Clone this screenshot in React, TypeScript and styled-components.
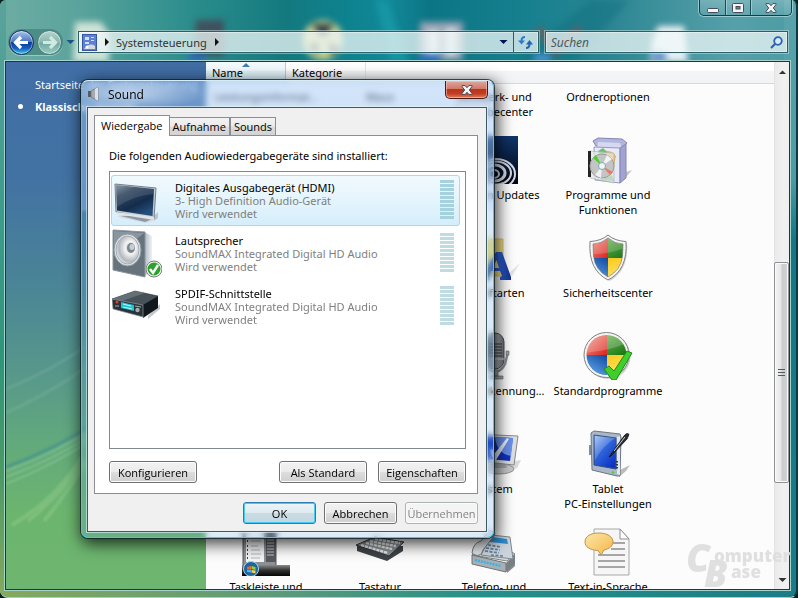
import React, { useState } from "react";
import styled, { createGlobalStyle, css } from "styled-components";

const GlobalStyle = createGlobalStyle`
  *, *::before, *::after { box-sizing: border-box; }
  body { margin: 0; background: #05302f; overflow: hidden; }
  button, input { font: inherit; color: inherit; margin: 0; padding: 0; }
  ul { list-style: none; margin: 0; padding: 0; }
`;

/* ---------- Explorer window ---------- */

const Desktop = styled.div`
  position: relative;
  height: 100vh;
  min-width: 600px;
  overflow: hidden;
  font-family: "Noto Sans", "Open Sans", sans-serif;
  font-size: 11px;
  line-height: 15px;
  color: #000;
  background: #06201f;
`;

const ExplorerWindow = styled.main`
  position: relative;
  display: flex;
  flex-direction: column;
  height: 100%;
  padding: 0 8px 7px 5px;
  overflow: hidden;
  border: solid #9fd0cc;
  border-width: 0 2px 1px 0;
  border-right-color: #0c3b42;
  border-radius: 6px 6px 8px 8px;
  background:
    linear-gradient(90deg, #86a95c, #5d9a78 35%, #279089 60%, #1b7c86) bottom / 100% 9px no-repeat,
    linear-gradient(180deg, #5aa39c 0, #3c9c8c 35%, #2e9579 60%, #4c9a63 80%, #86a95c) left / 6px 100% no-repeat,
    linear-gradient(180deg, #5aa3ab 0, #4c9ba4 30%, #137885 40%, #1b7c8a) right / 12px 100% no-repeat,
    linear-gradient(90deg, #6dada3 0, #5aa39c 10%, #2b8d8c 24%, #14797f 36%, #0d8390 44%, #128898 49%, #0c7585 54%, #16808f 66%, #2a8592 76%, #56a0a9 92%, #4c9ba4);
`;

const Wallpaper = styled.svg`
  position: absolute;
  inset: 0 auto auto 0;
  width: 798px;
  height: 62px;
  filter: blur(3px);
`;

const CaptionButtons = styled.div`
  position: relative;
  display: flex;
  align-self: flex-end;
  height: 16px;
  margin-right: -4px;
  border: 1px solid #123f47;
  border-top: 0;
  border-radius: 0 0 5px 5px;
  box-shadow: 0 0 0 1px rgba(190, 228, 230, 0.65);
  background: linear-gradient(rgba(255, 255, 255, 0.22), rgba(255, 255, 255, 0.08));
`;

const CaptionButton = styled.button<{ $wide?: boolean }>`
  display: flex;
  align-items: center;
  justify-content: center;
  width: ${(p) => (p.$wide ? 41 : 25)}px;
  border: 0;
  background: none;
  & + & { border-left: 1px solid #1b4c54; box-shadow: inset 1px 0 rgba(200, 232, 233, 0.5); }
`;

const NavBar = styled.nav`
  position: relative;
  display: flex;
  align-items: center;
  height: 45px;
  padding: 7px 0 0 3px;
  gap: 3px;
  flex: none;
`;

const HistoryButtons = styled.div`
  display: flex;
  align-items: center;
  flex: none;
  height: 26px;
  gap: 3px;
  padding: 0 1px;
  border-radius: 13px;
  background: rgba(20, 80, 80, 0.3);
  box-shadow: 0 1px rgba(200, 235, 230, 0.5);
`;

const RoundButton = styled.button<{ $active?: boolean }>`
  display: grid;
  place-items: center;
  width: 25px;
  height: 25px;
  border-radius: 50%;
  border: 1px solid ${(p) => (p.$active ? "#15305f" : "#4f7f7c")};
  background: ${(p) =>
    p.$active
      ? "linear-gradient(#a9c3ea 0, #4a78c4 46%, #0c3a94 50%, #1460c0 75%, #3ec4f2)"
      : "linear-gradient(#b5d4ce, #86b8b0 48%, #6fa9a1 52%, #9cccc2)"};
  box-shadow: inset 0 0 0 1px rgba(255, 255, 255, 0.45);
`;

const PlainButton = styled.button`
  display: grid;
  place-items: center;
  border: 0;
  background: none;
  flex: none;
`;

const fieldBox = css`
  display: flex;
  align-items: center;
  height: 22px;
  border: 1px solid #2c5f66;
  box-shadow: inset 0 0 0 1px rgba(255, 255, 255, 0.45), 0 0 0 1px rgba(205, 232, 232, 0.5);
  background: rgba(240, 248, 248, 0.75);
`;

const AddressBar = styled.div`
  ${fieldBox}
  flex: 468 1 0;
  min-width: 0;
`;

const Crumbs = styled.div`
  display: flex;
  flex: 1;
  align-items: center;
  gap: 5px;
  padding-left: 3px;
  color: #333;
`;

const Refresh = styled(PlainButton)`
  width: 25px;
  height: 20px;
  margin-left: 5px;
  border-left: 1px solid #2c5f66;
`;

const SearchBar = styled.label`
  ${fieldBox}
  flex: 237 1 0;
  min-width: 0;
  margin-left: 3px;
  padding: 0 4px 0 5px;
`;

const SearchInput = styled.input`
  flex: 1;
  min-width: 0;
  border: 0;
  outline: 0;
  background: none;
  font-style: italic;
  font-size: 12px;
  &::placeholder { color: #4a5c60; opacity: 1; }
`;

const Client = styled.div`
  position: relative;
  display: flex;
  flex: 1;
  min-height: 0;
  margin-right: -2px;
  border: 1px solid #123c44;
  box-shadow: 0 0 0 1px #a8d2cd;
  background: #fcfcfc;
`;

const Sidebar = styled.aside`
  position: relative;
  width: 200px;
  flex: none;
  padding: 11px 0 0 14px;
  overflow: hidden;
  color: #fff;
  background: linear-gradient(#416ea6 0, #4272a3 22%, #4a8496 42%, #58998a 60%, #62a97c 72%, #6cb56e 86%, #6eb670);
`;

const Streaks = styled.svg`
  position: absolute;
  left: 0;
  bottom: 20px;
  width: 200px;
  height: 240px;
  filter: blur(1px);
`;

const SideLink = styled.a<{ $current?: boolean }>`
  display: grid;
  grid-template-columns: 15px 1fr;
  align-items: center;
  height: 22px;
  color: #fff;
  text-decoration: none;
  white-space: nowrap;
  font-weight: ${(p) => (p.$current ? 700 : 400)};
  &::before {
    content: "";
    width: 5px;
    height: 5px;
    border-radius: 50%;
    margin-left: -2px;
    background: ${(p) => (p.$current ? "#fff" : "transparent")};
  }
`;

const FolderView = styled.section`
  display: flex;
  flex-direction: column;
  flex: 1;
  min-width: 0;
  overflow: hidden;
`;

const ColumnHeader = styled.div`
  display: flex;
  flex: none;
  height: 22px;
  border-bottom: 1px solid #d5d8dc;
  background: linear-gradient(#fff 0, #fff 40%, #f4f5f7 42%, #f2f3f5);
`;

const HeaderCell = styled.button<{ $sorted?: boolean }>`
  position: relative;
  width: 80px;
  padding-left: 6px;
  text-align: left;
  border: 0;
  border-right: 1px solid ${(p) => (p.$sorted ? "#9bd6f0" : "#e2e4e7")};
  background: ${(p) => (p.$sorted ? "linear-gradient(#f2fafd 0, #f2fafd 40%, #e2f3fa 42%, #d9eff8)" : "none")};
  svg { position: absolute; left: 36px; top: 1px; }
`;

const IconScroller = styled.div`
  flex: 1;
  min-height: 0;
  overflow: hidden;
`;

const IconGrid = styled.div`
  display: grid;
  grid-template-columns: repeat(4, 114px);
  grid-auto-rows: 98px;
  margin: -46px 0 0 3px;
`;

const IconCell = styled.a<{ $col: number; $row: number }>`
  grid-column: ${(p) => p.$col};
  grid-row: ${(p) => p.$row};
  display: flex;
  flex-direction: column;
  align-items: center;
  gap: 3px;
  color: #000;
  text-align: center;
  text-decoration: none;
  white-space: pre;
  svg { flex: none; }
`;

const ScrollTrack = styled.div`
  display: flex;
  flex-direction: column;
  width: 15px;
  flex: none;
  border-left: 1px solid #e3e3e3;
  background: linear-gradient(90deg, #eaeaea, #f1f1f1 60%, #efefef);
`;

const ScrollButton = styled(PlainButton)`
  height: 19px;
`;

const Spacer = styled.div<{ $grow: number }>`
  flex: ${(p) => p.$grow} 1 0;
`;

const ScrollThumb = styled.div`
  flex: 220 1 0;
  display: grid;
  place-items: center;
  margin-left: -1px;
  border: 1px solid #8f9194;
  border-radius: 2px;
  box-shadow: inset 0 0 0 1px #fafafa;
  background: linear-gradient(90deg, #f4f4f4, #e6e6e8 45%, #c9cbce 55%, #d2d3d6);
`;

/* ---------- Sound dialog ---------- */

const Dialog = styled.div`
  position: absolute;
  left: 81px;
  top: 80px;
  width: 413px;
  max-width: calc(100% - 90px);
  padding: 0 6px 5px 5px;
  border: 1px solid #d5ecf4;
  border-color: #d5ecf4 #38cdf2 #38cdf2 #7fb4bd;
  border-radius: 7px;
  box-shadow: 0 0 0 1px rgba(10, 30, 35, 0.75), 2px 4px 16px 2px rgba(0, 0, 0, 0.75);
  backdrop-filter: blur(3px);
  background:
    radial-gradient(ellipse 75px 16px at 48px 13px, rgba(225, 236, 250, 0.7), transparent),
    linear-gradient(180deg, rgba(160, 200, 245, 0.45) 0, rgba(150, 190, 245, 0.45) 28%, rgba(90, 170, 230, 0.22) 29%, rgba(90, 160, 235, 0.2));
`;

const TitleBar = styled.header`
  position: relative;
  display: flex;
  align-items: center;
  height: 26px;
  gap: 7px;
  font-family: "Open Sans", sans-serif;
  font-size: 12px;
`;

const CloseButton = styled.button`
  align-self: flex-start;
  display: grid;
  place-items: center;
  width: 43px;
  height: 18px;
  margin: 0 -1px 0 auto;
  border: 1px solid #4b1b17;
  border-top: 0;
  border-radius: 0 0 5px 5px;
  box-shadow: inset 0 0 0 1px rgba(255, 200, 190, 0.55);
  background: linear-gradient(#e0a79c 0, #d07a69 46%, #b93320 50%, #c33d22 75%, #df8058);
`;

const DialogBody = styled.div`
  padding: 7px 8px 7px 6px;
  border: 1px solid #3a5a66;
  box-shadow: 0 0 0 1px rgba(230, 245, 250, 0.6);
  background: #f0f0f0;
`;

const Tabs = styled.div`
  display: flex;
  align-items: flex-end;
  font-family: "Open Sans", sans-serif;
`;

const Tab = styled.button<{ $active: boolean }>`
  position: relative;
  height: ${(p) => (p.$active ? 21 : 18)}px;
  padding: ${(p) => (p.$active ? "0 6px 2px" : "0 3px")};
  margin-bottom: ${(p) => (p.$active ? -1 : 0)}px;
  border: 1px solid #8b8d96;
  border-bottom: 0;
  background: ${(p) => (p.$active ? "#fff" : "linear-gradient(#f3f3f3, #ebebeb 48%, #dddddd 52%, #d2d2d2)")};
  & + & { border-left-width: ${(p) => (p.$active ? 1 : 0)}px; }
  & + & + & { border-left-width: 1px; }
`;

const TabPanel = styled.div`
  padding: 12px 11px 10px 14px;
  border: 1px solid #8b8d96;
  background: #fff;
`;

const Intro = styled.p`
  margin: 0 0 8px;
`;

const DeviceList = styled.ul`
  display: flex;
  flex-direction: column;
  gap: 2px;
  min-height: 278px;
  padding: 3px 5px 3px 1px;
  border: 1px solid #828790;
`;

const DeviceRow = styled.li<{ $selected: boolean }>`
  display: grid;
  grid-template-columns: 50px 1fr 14px;
  column-gap: 13px;
  height: 51px;
  padding: 0 5px 0 0;
  border: 1px solid ${(p) => (p.$selected ? "#99defd" : "transparent")};
  border-radius: 3px;
  background: ${(p) => (p.$selected ? "linear-gradient(#f1fafe, #e3f4fc 55%, #d5eefb)" : "none")};
`;

const DeviceText = styled.div`
  padding-top: 5px;
  line-height: 13px;
  color: #7f7f7f;
  white-space: nowrap;
`;

const DeviceName = styled.div`
  color: #000;
`;

const Meter = styled.div<{ $selected: boolean }>`
  height: 39px;
  margin-top: 4px;
  background: repeating-linear-gradient(${(p) => (p.$selected ? "#a6d2df" : "#c0dce3")} 0 3px, transparent 3px 4px);
`;

const ButtonRow = styled.div<{ $top: number; $gap: number }>`
  display: flex;
  justify-content: flex-end;
  gap: ${(p) => p.$gap}px;
  margin-top: ${(p) => p.$top}px;
`;

const PushButton = styled.button<{ $width: number; $default?: boolean; $first?: boolean }>`
  width: ${(p) => p.$width}px;
  height: 22px;
  margin-right: ${(p) => (p.$first ? "auto" : "0")};
  border: 1px solid ${(p) => (p.$default ? "#2b7cb0" : "#707070")};
  border-radius: 3px;
  white-space: nowrap;
  font-family: "Open Sans", sans-serif;
  box-shadow: ${(p) => (p.$default ? "inset 0 0 0 1px #43cdf5" : "inset 0 0 0 1px #fcfcfc")};
  background: ${(p) =>
    p.$default
      ? "linear-gradient(#eef4f7, #dfeaf0 48%, #cadbe4 52%, #c3d6e0)"
      : "linear-gradient(#f2f2f2, #ebebeb 48%, #dddddd 52%, #cfcfcf)"};
  &:disabled { color: #838383; border-color: #adb2b5; background: #f4f4f4; }
`;

/* ---------- Watermark ---------- */

const Watermark = styled.svg`
  position: absolute;
  right: 8px;
  bottom: 6px;
  width: 110px;
  height: 50px;
  font-family: "Open Sans", sans-serif;
  font-weight: 800;
  fill: #dedede;
  opacity: 0.9;
`;

/* ---------- Drawings ---------- */

const XGlyph = () => (
  <svg width="12" height="10" viewBox="0 0 12 10" aria-hidden>
    <path d="M1 .6h3.2L6 2.7 7.8.6H11v1L8.3 5 11 8.4v1H7.8L6 7.3 4.2 9.4H1v-1L3.7 5 1 1.6Z" fill="#f4f4f4" stroke="#474c58" />
  </svg>
);

const Arrow = ({ dir, dim }: { dir: "left" | "right"; dim?: boolean }) => (
  <svg width="17" height="15" viewBox="0 0 17 15" aria-hidden>
    <path
      d={dir === "left" ? "M8 2 2.500 7.500 8 13M3 7.500h12" : "M9 2l5.500 5.500L9 13M14 7.500H2"}
      fill="none"
      stroke={dim ? "#d4e8e3" : "#fff"}
      strokeWidth="3.2"
    />
  </svg>
);

const Triangle = ({ dir = "down", color = "#111" }: { dir?: "down" | "right" | "up"; color?: string }) => (
  <svg width="9" height="8" viewBox="0 0 9 8" aria-hidden>
    <path d={{ down: "M.5 2h8l-4 4Z", right: "M3 0v8l4-4Z", up: "M1 6h7L4.500 2.500Z" }[dir]} fill={color} />
  </svg>
);

const TvIcon = () => (
  <svg width="48" height="48" viewBox="0 0 48 48" aria-hidden>
    <defs>
      <linearGradient id="tv" x1="0" y1="0" x2=".6" y2="1">
        <stop offset="0" stopColor="#8090a4" /><stop offset=".3" stopColor="#33475e" /><stop offset=".7" stopColor="#142c4c" /><stop offset="1" stopColor="#244d78" />
      </linearGradient>
    </defs>
    <path d="M42 40 46 36v6l-4 3Z" fill="#b9c6cf" />
    <path d="M14 38 5 40l5 2 24 5 9-3-8-4Z" fill="#d5dade" />
    <path d="M9 40 33 46l7-3-6-3Z" fill="#8d98a4" />
    <path d="M3 8 44 12 42 43 4 36Z" fill="#c4ccd3" stroke="#75808a" />
    <path d="M4 36 42 41v3L5 38Z" fill="#dfe4e8" />
    <path d="M4 9 42 13 40.500 40 5 34.500Z" fill="url(#tv)" />
    <path d="M4 9 42 13 41.500 18 Q20 20 5 31Z" fill="#b8c6d6" opacity=".16" />
  </svg>
);

const SpeakerIcon = () => (
  <svg width="50" height="50" viewBox="0 0 50 50" aria-hidden>
    <defs>
      <radialGradient id="cone" cx=".62" cy=".42" r=".65">
        <stop offset="0" stopColor="#a4abb0" /><stop offset=".35" stopColor="#f4f4f4" /><stop offset=".75" stopColor="#b1b8bd" /><stop offset="1" stopColor="#e6e9eb" />
      </radialGradient>
      <linearGradient id="side" x1="0" x2="1"><stop offset="0" stopColor="#a8b4c0" /><stop offset="1" stopColor="#eff3f7" /></linearGradient>
    </defs>
    <path d="M32 3 40 7v33l-8 8Z" fill="url(#side)" />
    <path d="M1 1 33 3v45L1 41Z" fill="#66727c" stroke="#8b959d" />
    <path d="M2 2 32 4 22 12 2 27Z" fill="#8996a0" />
    <ellipse cx="15.500" cy="21" rx="13.500" ry="16" fill="#dfe3e6" stroke="#8d979f" />
    <ellipse cx="15.500" cy="21" rx="11.500" ry="14" fill="url(#cone)" stroke="#a6aeb4" />
    <ellipse cx="19" cy="19" rx="4" ry="5" fill="#7c868d" /><ellipse cx="20" cy="18" rx="2.500" ry="3" fill="#c9ced2" />
    <circle cx="42" cy="40" r="7.500" fill="#2ba329" stroke="#f2f2f2" strokeWidth="2" />
    <circle cx="42" cy="40" r="8" fill="none" stroke="#777e77" />
    <path d="m38 40 3 4 5-8" fill="none" stroke="#fff" strokeWidth="2.400" />
  </svg>
);

const ReceiverIcon = () => (
  <svg width="48" height="48" viewBox="0 0 48 48" aria-hidden>
    <path d="M36 34 48 22v5L36 37Z" fill="#c4c8ca" />
    <path d="M0 17 23 9 46 14 31 24Z" fill="#485158" stroke="#2c343a" strokeWidth=".6" />
    <path d="M0 17 23 9l10 2L10 19Z" fill="#78848a" opacity=".6" />
    <path d="M31 23 46 14v12L31 36Z" fill="#12191e" />
    <path d="M0 17 31 23v12L1 27Z" fill="#2a3238" stroke="#8c989e" strokeWidth=".7" />
    <path d="m9 20 13 3v6L9 26Z" fill="#1fc3d3" />
    <path d="m11 22 8 2m-8 1 9 2" stroke="#bdf8fb" />
    <circle cx="5" cy="20" r="1.500" fill="#e5372c" /><circle cx="25.500" cy="28" r="2.200" fill="#a2adb3" />
    <path d="M3 24h4m16 0 6 1" stroke="#a2adb3" />
  </svg>
);

const BoxIcon = () => (
  <svg width="48" height="48" viewBox="0 0 48 48" aria-hidden>
    <path d="M36 38 48 34l-5 6-8 6Z" fill="#c4c4c8" />
    <path d="M9 5 14 2l24 1 5 4-5 5-26-2Z" fill="#b2b6dc" stroke="#8588b4" />
    <path d="M14 6 36 7l2 6-25-1Z" fill="#d6d8f2" />
    <path d="M10 11 36 12v35L11 44Z" fill="#e9eaf8" stroke="#9699c0" />
    <path d="M36 12 42 8v34l-6 5Z" fill="#a1a4d2" stroke="#8588b4" />
    <path d="M19 15q9-1 13 5l-2 11-10-3Z" fill="#eeb654" /><path d="m14 15 5-3 4 4-7 6Z" fill="#6dbb7a" /><path d="m16 44 12-5 2 6Z" fill="#56a764" />
    <path d="M5 15 30 17v30L6 42Z" fill="#e2e7e3" opacity=".75" stroke="#b2b9b4" />
    <path d="M4 15h3v26H4Z" fill="#252525" />
    <circle cx="18" cy="30" r="12" fill="#c3c5c5" stroke="#9b9d9d" />
    <path d="M18 30 9 22l3-3Z" fill="#50ce30" /><path d="m18 30 5-11 5 4Z" fill="#f3f3f3" /><path d="m18 30 11 6-3 3Z" fill="#e87a69" /><path d="m18 30-7 9 6 3Z" fill="#f0f0f0" />
    <circle cx="18" cy="30" r="3.500" fill="#eff6f9" stroke="#83a6b2" />
  </svg>
);

const QuadDefs = () => (
  <defs>
    <linearGradient id="qr" x1="0" y1="0" x2="1" y2="1"><stop offset="0" stopColor="#f9b0a4" /><stop offset="1" stopColor="#d9241c" /></linearGradient>
    <linearGradient id="qg" x1="0" y1="0" x2=".6" y2="1"><stop offset="0" stopColor="#7cb860" /><stop offset="1" stopColor="#1b7a14" /></linearGradient>
    <linearGradient id="qb" x1="1" y1="0" x2=".4" y2="1"><stop offset="0" stopColor="#1048a0" /><stop offset="1" stopColor="#69b0f2" /></linearGradient>
    <linearGradient id="qy" x1="0" y1="0" x2=".4" y2="1"><stop offset="0" stopColor="#fbc81c" /><stop offset="1" stopColor="#fdea72" /></linearGradient>
  </defs>
);

const ShieldIcon = () => (
  <svg width="48" height="48" viewBox="0 0 48 48" aria-hidden>
    <QuadDefs />
    <clipPath id="shield"><path d="M24 4Q31 10 39 10L38.500 22Q37 36 24 43 11 36 9.500 22L9 10Q17 10 24 4Z" /></clipPath>
    <path d="M25 2Q33 8 43 9 45 36 26 47 8 38 7 9 19 8 25 2Z" fill="#aaa" opacity=".5" />
    <path d="M24 1Q31 7 42 7.500 44 36 24 46 4 36 6 7.500 17 7 24 1Z" fill="#f4f4f4" stroke="#808080" />
    <g clipPath="url(#shield)">
      <path d="M0 0h24v24H0Z" fill="url(#qr)" /><path d="M24 0h24v24H24Z" fill="url(#qg)" /><path d="M0 24h24v24H0Z" fill="url(#qb)" /><path d="M24 24h24v24H24Z" fill="url(#qy)" />
      <path d="M8 20Q26 20 40 14V8L24 3 8 8Z" fill="#fff" opacity=".18" />
    </g>
    <path d="M24 4Q31 10 39 10L38.500 22Q37 36 24 43 11 36 9.500 22L9 10Q17 10 24 4Z" fill="none" stroke="#6d6d6d" strokeWidth=".6" />
  </svg>
);

const DefaultsIcon = () => (
  <svg width="50" height="48" viewBox="0 0 50 48" aria-hidden>
    <QuadDefs />
    <clipPath id="disc"><circle cx="23.500" cy="23" r="20" /></clipPath>
    <circle cx="25" cy="24.500" r="22.500" fill="#999" opacity=".45" />
    <circle cx="23.500" cy="23" r="22.500" fill="#f4f4f4" stroke="#808080" />
    <g clipPath="url(#disc)">
      <path d="M0 0h24v23H0Z" fill="url(#qr)" /><path d="M24 0h24v23H24Z" fill="url(#qg)" /><path d="M0 23h24v24H0Z" fill="url(#qb)" /><path d="M24 23h24v24H24Z" fill="url(#qy)" />
      <path d="M0 21Q26 19 46 10V0H0Z" fill="#fff" opacity=".2" />
    </g>
    <path d="m21 37 5-3 5 5L44 19l5 2-16 27h-4Z" fill="#3fcf2b" stroke="#1c8b18" />
  </svg>
);

const TabletIcon = () => (
  <svg width="48" height="48" viewBox="0 0 48 48" aria-hidden>
    <defs><linearGradient id="tab" x1="0" y1="0" x2=".7" y2="1"><stop offset="0" stopColor="#9cc0f6" /><stop offset=".45" stopColor="#3268dc" /><stop offset="1" stopColor="#0c34c4" /></linearGradient></defs>
    <path d="M36 40 46 35l-4 6-7 6Z" fill="#bcbcbc" />
    <path d="M7 3 10 1 36 4 37 7 36 46 33 46 8 40Z" fill="#a9b7c6" stroke="#6b7682" />
    <path d="M33 7 36 6v39l-3-1Z" fill="#e2e9ee" />
    <path d="M10 5 32 8v31L10 35Z" fill="url(#tab)" stroke="#3b4e78" />
    <path d="M11 6 31 8Q19 16 11 30Z" fill="#fff" opacity=".2" />
    <path d="M6 15v10" stroke="#7d8c9d" strokeWidth="2" />
    <path d="M33 31v9" stroke="#303840" strokeWidth="2" strokeDasharray="1.500 1.500" />
    <circle cx="29" cy="42.500" r="1.200" fill="#44d62c" />
    <path d="M25 27 40 6q3-4 5-1.500L43 9 27 26Z" fill="#282c30" stroke="#111" strokeWidth=".8" /><path d="M30 21 41 7" stroke="#c8ccd0" />
  </svg>
);

const SpeechIcon = () => (
  <svg width="50" height="48" viewBox="0 0 50 48" aria-hidden>
    <defs><linearGradient id="bub" x1="0" y1="0" x2="1" y2="1"><stop offset="0" stopColor="#fbe7a8" /><stop offset="1" stopColor="#f6b548" /></linearGradient></defs>
    <path d="M11 1H37l9 10v36H11Z" fill="#f6f6f6" stroke="#a7a7a7" />
    <path d="M37 1v10h9Z" fill="#fff" stroke="#8d8d8d" />
    <path d="M28 15h14M28 21h14M15 27h27M15 33h27M15 39h27" stroke="#8c8c8c" strokeWidth="1.500" />
    <path d="M16 5c8 0 14 3.500 14 9 0 4-4 7-9 8l-3 5-3-4.500C7 22 2 19 2 14c0-6 6-9 14-9Z" fill="url(#bub)" stroke="#c3944b" />
  </svg>
);

const RingsIcon = () => (
  <svg width="48" height="48" viewBox="0 0 48 48" aria-hidden>
    <defs><linearGradient id="night" x1="0" y1="0" x2="0" y2="1"><stop offset="0" stopColor="#10366c" /><stop offset="1" stopColor="#02050f" /></linearGradient><clipPath id="sq"><path d="M0 0h48v48H0Z" /></clipPath></defs>
    <g clipPath="url(#sq)">
      <path d="M0 0h48v48H0Z" fill="url(#night)" />
      <g fill="none" stroke="#d6dae6">
        <ellipse cx="24" cy="38" rx="5" ry="4" strokeWidth="2" /><ellipse cx="25" cy="37" rx="10" ry="8" strokeWidth="3" /><ellipse cx="26" cy="37" rx="15" ry="11.500" strokeWidth="2" /><ellipse cx="26" cy="38" rx="19" ry="15" strokeWidth="2" />
      </g>
    </g>
  </svg>
);

const FontsIcon = () => (
  <svg width="56" height="48" viewBox="0 0 56 48" aria-hidden>
    <defs><linearGradient id="fa" x1="0" x2="1"><stop offset="0" stopColor="#16368c" /><stop offset=".6" stopColor="#2f63dc" /><stop offset="1" stopColor="#14308a" /></linearGradient></defs>
    <path d="M8 5h29v37H8Z" fill="#eddc84" stroke="#dac868" />
    <path d="M42 40 54 29l-8 13Z" fill="#ccc" opacity=".5" />
    <path d="M30 18h6l9 25v3H34v-3l2-1-2-5h-9l-3 6 2 3H15v-3Zm-3 16h6l-2.500-8Z" fill="url(#fa)" />
  </svg>
);

const MicIcon = () => (
  <svg width="48" height="48" viewBox="0 0 48 48" aria-hidden>
    <defs><linearGradient id="mic" x1="0" x2="1"><stop offset="0" stopColor="#6c7078" /><stop offset=".7" stopColor="#a5a8af" /><stop offset="1" stopColor="#656970" /></linearGradient></defs>
    <path d="M14 35q15 10 21-3l3-12" fill="none" stroke="#85888e" strokeWidth="2.500" />
    <path d="M36 19h3v4h-3ZM23 38h5v6h-5ZM18 44h15v3H18Z" fill="#9fa2a8" stroke="#60646a" strokeWidth=".6" />
    <rect x="15" y="1" width="19" height="36" rx="9" fill="url(#mic)" stroke="#484b52" />
    <path d="M17 12h15M17 15h15M17 18h15M17 21h15M17 24h15" stroke="#35383e" />
    <path d="M15 27h19" stroke="#d4d6da" />
  </svg>
);

const SystemIcon = () => (
  <svg width="54" height="48" viewBox="0 0 54 48" aria-hidden>
    <path d="M42 32 54 30l-4 8-12 3Z" fill="#ccc" opacity=".7" />
    <ellipse cx="32" cy="39" rx="15" ry="5" fill="#c5c7c8" stroke="#8f9294" />
    <path d="M26 30h12l2 8H25Z" fill="#9fa2a4" />
    <path d="M6 4 51 6 47 35 8 31Z" fill="#dedfe0" stroke="#87898c" />
    <path d="M9 6 46 8 43 31 11 28Z" fill="#1132be" />
    <path d="M28 7 46 8 44 26Q30 24 28 7Z" fill="#7fa6f6" opacity=".8" />
    <path d="m22 20 3-1 3 4L40 8l2 1-13 21h-2Z" fill="#e8eefa" />
  </svg>
);

const PhoneIcon = () => (
  <svg width="50" height="48" viewBox="0 0 50 48" aria-hidden>
    <path d="M38 38 46 32v6l-8 7Z" fill="#858b90" />
    <path d="M3 27 38 33 46 26 38 21 8 19Z" fill="#d5d9db" stroke="#7f8689" />
    <path d="M3 27 37 35v9L3 36Z" fill="#a9b0b4" stroke="#6d7477" />
    <path d="M37 35 46 26v9l-9 9Z" fill="#797f83" />
    <path d="m6 32 26 6" stroke="#36b2e6" strokeWidth="2.500" strokeDasharray="2 1" />
    <path d="M22 7 41 9 44 31 12 27Z" fill="#ccd5dc" stroke="#80888e" />
    <path d="m23 9 15 2 1 5-18-2Z" fill="#2d8fd4" />
    <path d="m19 17 13 2M17 20l14 2M16 23l14 2M22 27l12 1" stroke="#5f7fa4" strokeWidth="1.700" strokeDasharray="3 1.500" />
    <path d="M3 25Q4 15 12 13L20 3q8 0 5 5L14 22q-2 7-8 5Z" fill="#dfe3e5" stroke="#71787c" />
  </svg>
);

const KeyboardIcon = () => (
  <svg width="50" height="48" viewBox="0 0 50 48" aria-hidden>
    <path d="M2 18v5l30 10 16-10v-5Z" fill="#3e4347" />
    <path d="M1 17 20 9 49 14 34 28Z" fill="#8a9095" stroke="#35393c" />
    <path d="m6 17 27 8M11 15l26 6M15 13l26 5M20 11l25 4" stroke="#eef0f2" strokeWidth="2.300" strokeDasharray="3.200 .8" />
  </svg>
);

const TaskbarIcon = () => (
  <svg width="48" height="48" viewBox="0 0 48 48" aria-hidden>
    <defs><linearGradient id="tb" x1="0" y1="0" x2="0" y2="1"><stop offset="0" stopColor="#8a8a8a" /><stop offset=".5" stopColor="#303030" /><stop offset="1" stopColor="#050505" /></linearGradient></defs>
    <path d="M1 0h33v38H1Z" fill="#8d9195" stroke="#555" /><path d="M4 0h18v34H4Z" fill="#f2f4f6" /><path d="M24 0h10v34H24Z" fill="#55595d" />
    <path d="M9 13h10M9 18h7M9 22h9M9 26h10M9 30h9" stroke="#b5b5b5" />
    <path d="M5 13h1M5 18h1M5 22h1M5 26h1M5 30h1" stroke="#2137c8" strokeWidth="2" />
    <path d="M25 12h7M25 15h7M25 18h7M25 21h7M25 24h7M25 27h7" stroke="#c8c8c8" />
    <path d="M0 37h48v11H0Z" fill="url(#tb)" />
    <circle cx="9" cy="41" r="7.500" fill="#1c659e" stroke="#a3d5ee" />
    <path d="m5 39 4-1v3l-4 .5Z" fill="#f0652c" /><path d="m9.500 38 4 1v3l-4-1Z" fill="#8ccf3b" /><path d="M5 42l4-.5v3L5 44Z" fill="#4cb3f0" /><path d="m9.500 42 4 .5v3l-4-1Z" fill="#fbd03a" />
  </svg>
);

const Blank = () => <svg width="48" height="48" aria-hidden />;

type Item = { label: string; col: number; row: number; Icon: () => React.ReactElement };

const items: Item[] = [
  { label: "Leistungsinformat...", col: 1, row: 1, Icon: Blank },
  { label: "Maus", col: 2, row: 1, Icon: Blank },
  { label: "Netzwerk- und\nFreigabecenter", col: 3, row: 1, Icon: Blank },
  { label: "Ordneroptionen", col: 4, row: 1, Icon: Blank },
  { label: "Program Updates", col: 3, row: 2, Icon: RingsIcon },
  { label: "Programme und\nFunktionen", col: 4, row: 2, Icon: BoxIcon },
  { label: "Schriftarten", col: 3, row: 3, Icon: FontsIcon },
  { label: "Sicherheitscenter", col: 4, row: 3, Icon: ShieldIcon },
  { label: "Spracherkennung...", col: 3, row: 4, Icon: MicIcon },
  { label: "Standardprogramme", col: 4, row: 4, Icon: DefaultsIcon },
  { label: "System", col: 3, row: 5, Icon: SystemIcon },
  { label: "Tablet\nPC-Einstellungen", col: 4, row: 5, Icon: TabletIcon },
  { label: "Taskleiste und", col: 1, row: 6, Icon: TaskbarIcon },
  { label: "Tastatur", col: 2, row: 6, Icon: KeyboardIcon },
  { label: "Telefon- und", col: 3, row: 6, Icon: PhoneIcon },
  { label: "Text-in-Sprache", col: 4, row: 6, Icon: SpeechIcon },
];

const devices = [
  { name: "Digitales Ausgabegerät (HDMI)", driver: "3- High Definition Audio-Gerät", Icon: TvIcon },
  { name: "Lautsprecher", driver: "SoundMAX Integrated Digital HD Audio", Icon: SpeakerIcon },
  { name: "SPDIF-Schnittstelle", driver: "SoundMAX Integrated Digital HD Audio", Icon: ReceiverIcon },
];

const tabs = ["Wiedergabe", "Aufnahme", "Sounds"];

function SoundDialog() {
  const [tab, setTab] = useState(0);
  const [selected, setSelected] = useState(0);
  return (
    <Dialog role="dialog" aria-labelledby="sound-title">
      <TitleBar>
        <svg width="14" height="16" viewBox="0 0 14 16" aria-hidden>
          <path d="M1 5h3v6H1Z" fill="#565b61" /><path d="M4 5 11 1v14L4 11Z" fill="#a5aab0" stroke="#6c7177" strokeWidth=".7" /><path d="M8 3 11 1v14L8 13Z" fill="#dfe1e3" />
        </svg>
        <span id="sound-title">Sound</span>
        <CloseButton aria-label="Schließen"><XGlyph /></CloseButton>
      </TitleBar>
      <DialogBody>
        <Tabs role="tablist">
          {tabs.map((t, i) => (
            <Tab key={t} role="tab" aria-selected={tab === i} $active={tab === i} onClick={() => setTab(i)}>{t}</Tab>
          ))}
        </Tabs>
        <TabPanel role="tabpanel">
          <Intro>Die folgenden Audiowiedergabegeräte sind installiert:</Intro>
          <DeviceList role="listbox" aria-label="Audiowiedergabegeräte">
            {devices.map(({ name, driver, Icon }, i) => (
              <DeviceRow key={name} role="option" aria-selected={selected === i} $selected={selected === i} onClick={() => setSelected(i)}>
                <Icon />
                <DeviceText>
                  <DeviceName>{name}</DeviceName>
                  <div>{driver}</div>
                  <div>Wird verwendet</div>
                </DeviceText>
                <Meter $selected={selected === i} />
              </DeviceRow>
            ))}
          </DeviceList>
          <ButtonRow $top={12} $gap={11}>
            <PushButton $width={88} $first>Konfigurieren</PushButton>
            <PushButton $width={88}>Als Standard</PushButton>
            <PushButton $width={88}>Eigenschaften</PushButton>
          </ButtonRow>
        </TabPanel>
        <ButtonRow $top={8} $gap={8}>
          <PushButton $width={73} $default>OK</PushButton>
          <PushButton $width={73}>Abbrechen</PushButton>
          <PushButton $width={73} disabled>Übernehmen</PushButton>
        </ButtonRow>
      </DialogBody>
    </Dialog>
  );
}

export default function App() {
  return (
    <Desktop>
      <GlobalStyle />
      <ExplorerWindow>
        <Wallpaper viewBox="0 0 798 62" preserveAspectRatio="none" aria-hidden>
          <path d="M375 0h12l22 62h-18Z" fill="#1ba5b4" opacity=".5" />
          <path d="M590 0h40l-55 62h-60Z" fill="#0d6c7b" opacity=".4" />
          <path d="M75 22h26l8 12v28H73Z" fill="#e4ede0" opacity=".85" />
          <path d="M196 20h28v36h-30Z" fill="#4a3a4c" opacity=".7" /><path d="M188 54h18v8h-18Z" fill="#2c6cc0" />
          <circle cx="323" cy="40" r="20" fill="#d9d68c" opacity=".9" /><path d="M312 24h22l-8 12h-6ZM308 46l10-4v12ZM328 42l12 6-8 8Z" fill="#38424a" />
          <path d="M420 22h43v38h-43Z" fill="#9aa4b4" /><path d="M428 30h10v26h-10ZM446 28h10v28h-10Z" fill="#d8dce8" /><path d="M420 54h20v8h-20Z" fill="#2c6cc0" />
          <path d="m538 28 18 24 24-24" fill="none" stroke="#b1443c" strokeWidth="7" opacity=".55" /><path d="M534 54h16v8h-16Z" fill="#4a8fd0" />
          <path d="M658 26h26l4 36h-38l2-20Z" fill="#e8eef4" /><path d="M652 52h14v8h-14Z" fill="#5b86c8" />
        </Wallpaper>
        <CaptionButtons>
          <CaptionButton aria-label="Minimieren">
            <svg width="12" height="10" viewBox="0 0 12 10" aria-hidden><rect x=".5" y="5.500" width="11" height="4" rx="1" fill="#f4f4f4" stroke="#474c58" /></svg>
          </CaptionButton>
          <CaptionButton aria-label="Maximieren">
            <svg width="12" height="10" viewBox="0 0 12 10" aria-hidden><rect x=".5" y=".5" width="11" height="9" rx="1" fill="#f4f4f4" stroke="#474c58" /><rect x="4" y="3.500" width="4" height="2.500" fill="#5a8d96" stroke="#474c58" /></svg>
          </CaptionButton>
          <CaptionButton aria-label="Schließen" $wide><XGlyph /></CaptionButton>
        </CaptionButtons>
        <NavBar>
          <HistoryButtons>
            <RoundButton $active aria-label="Zurück"><Arrow dir="left" /></RoundButton>
            <RoundButton aria-label="Vorwärts"><Arrow dir="right" dim /></RoundButton>
          </HistoryButtons>
          <PlainButton aria-label="Verlauf"><Triangle color="#1c4f8c" /></PlainButton>
          <AddressBar>
            <Crumbs>
              <svg width="15" height="17" viewBox="0 0 15 17" aria-hidden>
                <rect x=".5" y=".5" width="14" height="16" fill="#5f7fd0" stroke="#3856a8" />
                <path d="M3 3h4v3H3ZM9 3h3v1H9ZM9 6h3v1H9ZM3 8h4v2H3Z" fill="#cfe0fa" /><path d="M2 15q6-7 11-3v3Z" fill="#d4d8de" /><circle cx="5" cy="13" r="1.500" fill="#fff" />
              </svg>
              <Triangle dir="right" />
              <span>Systemsteuerung</span>
              <Triangle dir="right" />
            </Crumbs>
            <PlainButton aria-label="Adressliste"><Triangle color="#0a1050" /></PlainButton>
            <Refresh aria-label="Aktualisieren">
              <svg width="15" height="15" viewBox="0 0 15 15" aria-hidden>
                <path d="M7 2Q3.500 2 3.500 6" fill="none" stroke="#2e7cc8" strokeWidth="2" /><path d="M0 5.500h7L3.500 9.500Z" fill="#2e7cc8" />
                <path d="M8 13q3.500 0 3.500-4" fill="none" stroke="#2463b4" strokeWidth="2" /><path d="M8 9.500h7L11.500 5Z" fill="#2463b4" />
              </svg>
            </Refresh>
          </AddressBar>
          <SearchBar>
            <SearchInput aria-label="Suchen" placeholder="Suchen" />
            <svg width="13" height="13" viewBox="0 0 13 13" aria-hidden>
              <circle cx="8" cy="5" r="3.800" fill="#d9ecf6" stroke="#2a62b4" strokeWidth="1.800" /><path d="M5.500 7.500 1 12" stroke="#2a62b4" strokeWidth="2.200" />
            </svg>
          </SearchBar>
        </NavBar>
        <Client>
          <Sidebar>
            <Streaks viewBox="0 0 200 240" preserveAspectRatio="none" aria-hidden>
              <g fill="none">
                <path d="M0 60Q50 40 90 10M0 84Q60 56 90 30" stroke="#a5cdb8" strokeWidth="3" opacity=".18" />
                <path d="M0 138Q50 120 90 93" stroke="#3d8a98" strokeWidth="3" opacity=".6" />
                <path d="M0 142Q50 124 90 98M0 148Q50 130 90 103M0 155Q50 135 90 108" stroke="#a6d8b0" strokeWidth="2" opacity=".4" />
                <path d="M6 196Q50 170 76 128M22 192Q55 165 78 132M38 192Q60 165 80 134" stroke="#a8dc98" strokeWidth="4" opacity=".3" />
              </g>
            </Streaks>
            <SideLink href="#start">Startseite der Systemsteuerung</SideLink>
            <SideLink href="#classic" $current>Klassische Ansicht</SideLink>
          </Sidebar>
          <FolderView>
            <ColumnHeader>
              <HeaderCell $sorted>Name<svg width="9" height="4" viewBox="0 0 9 4" aria-hidden><path d="M0 4h8L4 0Z" fill="#3f7fa8" /></svg></HeaderCell>
              <HeaderCell>Kategorie</HeaderCell>
            </ColumnHeader>
            <IconScroller>
              <IconGrid>
                {items.map(({ label, col, row, Icon }) => (
                  <IconCell key={label} href="#item" $col={col} $row={row}><Icon />{label}</IconCell>
                ))}
              </IconGrid>
            </IconScroller>
          </FolderView>
          <ScrollTrack>
            <ScrollButton aria-label="Nach oben"><Triangle dir="up" color="#333" /></ScrollButton>
            <Spacer $grow={182} />
            <ScrollThumb>
              <svg width="7" height="8" viewBox="0 0 7 8" aria-hidden><path d="M0 1.500h7M0 4.500h7M0 7.500h7" stroke="#55585c" /></svg>
            </ScrollThumb>
            <Spacer $grow={88} />
            <ScrollButton aria-label="Nach unten"><Triangle color="#333" /></ScrollButton>
          </ScrollTrack>
        </Client>
      </ExplorerWindow>
      <SoundDialog />
      <Watermark viewBox="0 0 110 50" aria-label="ComputerBase">
        <text x="6" y="30" fontSize="38" fontStyle="italic">C</text><text x="34" y="20" fontSize="17">omputer</text>
        <text x="24" y="45" fontSize="37" fontStyle="italic">B</text><text x="51" y="36" fontSize="17">ase</text>
      </Watermark>
    </Desktop>
  );
}
